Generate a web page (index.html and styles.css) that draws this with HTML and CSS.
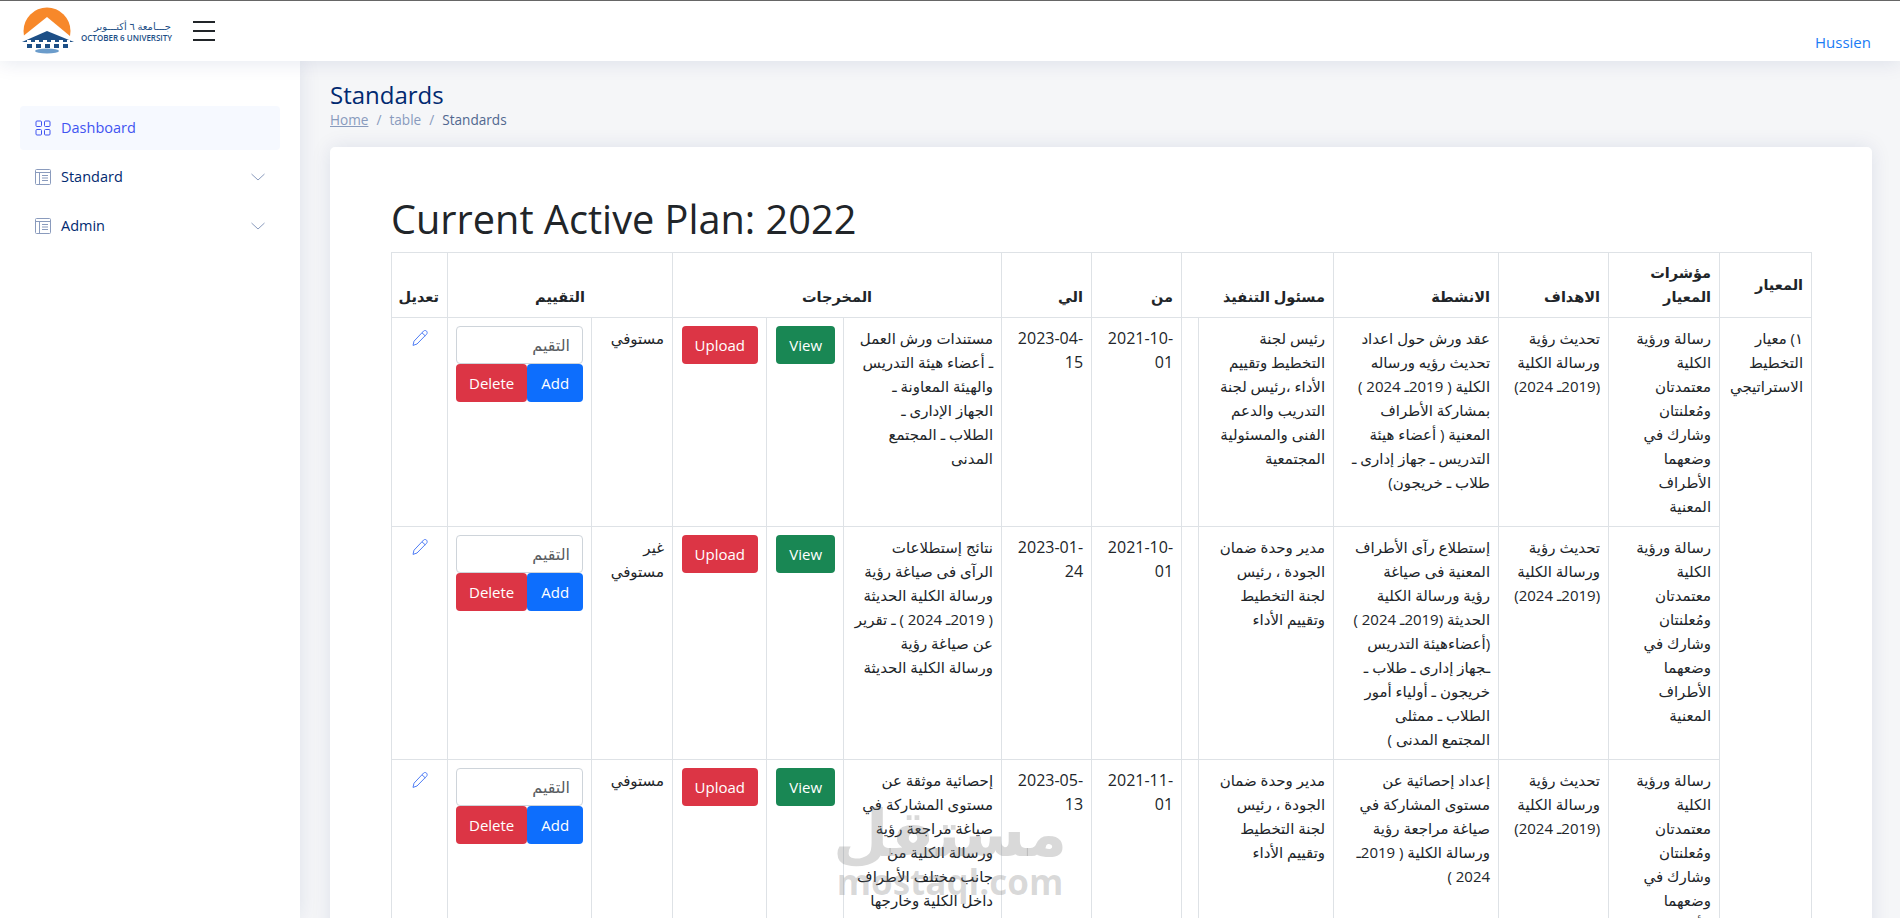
FILE: index.html
```html
<!DOCTYPE html>
<html lang="en">
<head>
  <meta charset="UTF-8">
  <title>Standards</title>
  <link rel="stylesheet" href="styles.css">
</head>
<body>

  <header class="topbar">
    <div class="logo">
      <svg class="logo-mark" width="54" height="48" viewBox="0 0 54 48">
        <circle cx="25" cy="24" r="23.5" fill="#f7882a"/>
        <path d="M25 10 L54 34 L54 48 L0 48 L0 30 Z" fill="#fff"/>
        <path d="M25 24 L52 35 L0 35 Z" fill="#1d4f86"/>
        <path d="M5 33h4v2H5zM13 33h4v2h-4zM21 33h4v2h-4zM29 33h4v2h-4zM37 33h4v2h-4zM45 33h3v2h-3z" fill="#fff"/>
        <path d="M5 37h5v4H5zM14 37h5v4h-5zM23 37h5v4h-5zM32 37h5v4h-5zM41 37h5v4h-5z" fill="#1d4f86"/>
        <ellipse cx="25" cy="44" rx="12" ry="2.5" fill="#6b9ccb"/>
      </svg>
      <div class="logo-text">
        <span class="logo-ar" dir="rtl">جـــامعة ٦ أكتـــوبر</span>
        <span class="logo-en">OCTOBER 6 UNIVERSITY</span>
      </div>
    </div>
    <div class="burger"><i></i><i></i><i></i></div>
    <a class="user" href="#">Hussien</a>
  </header>

  <div class="layout">
    <aside class="sidebar">
      <a class="nav-item active" href="#">
        <svg class="nav-icon" viewBox="0 0 16 16" fill="none" stroke="currentColor"><rect x="1" y="1" width="5.5" height="5.5" rx="1"/><rect x="9.5" y="1" width="5.5" height="5.5" rx="1"/><rect x="1" y="9.5" width="5.5" height="5.5" rx="1"/><rect x="9.5" y="9.5" width="5.5" height="5.5" rx="1"/></svg>
        Dashboard
      </a>
      <a class="nav-item" href="#">
        <svg class="nav-icon" viewBox="0 0 16 16" fill="none" stroke="#8a9bbd"><rect x=".5" y=".5" width="15" height="15" rx="1"/><path d="M.5 3.5h15M4.5 3.5v12M7 6.5h6M7 9h6M7 11.5h6"/></svg>
        Standard
        <svg class="chev" viewBox="0 0 14 8" fill="none" stroke="#8a9bbd"><path d="M.5 1l6.5 6 6.5-6"/></svg>
      </a>
      <a class="nav-item" href="#">
        <svg class="nav-icon" viewBox="0 0 16 16" fill="none" stroke="#8a9bbd"><rect x=".5" y=".5" width="15" height="15" rx="1"/><path d="M.5 3.5h15M4.5 3.5v12M7 6.5h6M7 9h6M7 11.5h6"/></svg>
        Admin
        <svg class="chev" viewBox="0 0 14 8" fill="none" stroke="#8a9bbd"><path d="M.5 1l6.5 6 6.5-6"/></svg>
      </a>
    </aside>

    <main class="main">
      <h1 class="page-title">Standards</h1>
      <nav class="crumbs"><a href="#">Home</a><span>/</span><em>table</em><span>/</span><b>Standards</b></nav>

      <section class="card">
        <h2 class="plan">Current Active Plan: 2022</h2>
        <table class="plan-table" dir="rtl">
          <colgroup>
            <col class="c-std"><col class="c-ind"><col class="c-goal"><col class="c-act"><col class="c-owner"><col class="c-blank">
            <col class="c-date"><col class="c-date"><col class="c-out"><col class="c-view"><col class="c-up">
            <col class="c-state"><col class="c-rate"><col class="c-edit">
          </colgroup>
          <thead>
            <tr>
              <th>المعيار</th>
              <th>مؤشرات<br>المعيار</th>
              <th>الاهداف</th>
              <th>الانشطة</th>
              <th colspan="2">مسئول التنفيذ</th>
              <th>من</th>
              <th>الي</th>
              <th class="mid" colspan="3">المخرجات</th>
              <th class="mid" colspan="2">التقييم</th>
              <th>تعديل</th>
            </tr>
          </thead>
          <tbody>
            <tr>
              <td rowspan="3">١) معيار<br>التخطيط<br>الاستراتيجي</td>
              <td>رسالة ورؤية<br>الكلية<br>معتمدتان<br>ومُعلنتان<br>وشارك في<br>وضعهما<br>الأطراف<br>المعنية</td>
              <td>تحديث رؤية<br>ورسالة الكلية<br>(2019ـ 2024)</td>
              <td>عقد ورش حول اعداد<br>تحديث رؤيه ورساله<br>الكلية ( 2019ـ 2024 )<br>بمشاركة الأطراف<br>المعنية ( أعضاء هيئة<br>التدريس ـ جهاز إدارى ـ<br>طلاب ـ خريجون)</td>
              <td>رئيس لجنة<br>التخطيط وتقييم<br>الأداء ،رئيس لجنة<br>التدريب والدعم<br>الفنى والمسئولية<br>المجتمعية</td>
              <td></td>
              <td class="date"><bdi>2021-10-</bdi><br>01</td>
              <td class="date"><bdi>2023-04-</bdi><br>15</td>
              <td>مستندات ورش العمل<br>ـ أعضاء هيئة التدريس<br>والهيئة المعاونة ـ<br>الجهاز الإدارى ـ<br>الطلاب ـ المجتمع<br>المدنى</td>
              <td><button class="btn green">View</button></td>
              <td><button class="btn red">Upload</button></td>
              <td>مستوفي</td>
              <td>
                <input class="rate" placeholder="التقيم" dir="rtl">
                <div class="rate-btns"><button class="btn blue">Add</button><button class="btn red">Delete</button></div>
              </td>
              <td class="edit"><svg class="pencil" viewBox="0 0 16 16" fill="none" stroke="#4f7df5"><path d="M11.6 1c1-.8 2.3-.6 3 .2s.8 2 0 3L5 14 1 15.4 2 11.2zM10 2.8l3.2 3"/></svg></td>
            </tr>
            <tr>
              <td>رسالة ورؤية<br>الكلية<br>معتمدتان<br>ومُعلنتان<br>وشارك في<br>وضعهما<br>الأطراف<br>المعنية</td>
              <td>تحديث رؤية<br>ورسالة الكلية<br>(2019ـ 2024)</td>
              <td>إستطلاع رآى الأطراف<br>المعنية فى صياغة<br>رؤية ورسالة الكلية<br>الحديثة (2019ـ 2024 )<br>(أعضاءهيئة التدريس<br>ـجهاز إدارى ـ طلاب ـ<br>خريجون ـ أولياء أمور<br>الطلاب ـ ممثلى<br>المجتمع المدنى )</td>
              <td>مدير وحدة ضمان<br>الجودة ، رئيس<br>لجنة التخطيط<br>وتقييم الأداء</td>
              <td></td>
              <td class="date"><bdi>2021-10-</bdi><br>01</td>
              <td class="date"><bdi>2023-01-</bdi><br>24</td>
              <td>نتائج إستطلاعات<br>الرآى فى صياغة رؤية<br>ورسالة الكلية الحديثة<br>( 2019ـ 2024 ) ـ تقرير<br>عن صياغة رؤية<br>ورسالة الكلية الحديثة</td>
              <td><button class="btn green">View</button></td>
              <td><button class="btn red">Upload</button></td>
              <td>غير<br>مستوفي</td>
              <td>
                <input class="rate" placeholder="التقيم" dir="rtl">
                <div class="rate-btns"><button class="btn blue">Add</button><button class="btn red">Delete</button></div>
              </td>
              <td class="edit"><svg class="pencil" viewBox="0 0 16 16" fill="none" stroke="#4f7df5"><path d="M11.6 1c1-.8 2.3-.6 3 .2s.8 2 0 3L5 14 1 15.4 2 11.2zM10 2.8l3.2 3"/></svg></td>
            </tr>
            <tr>
              <td>رسالة ورؤية<br>الكلية<br>معتمدتان<br>ومُعلنتان<br>وشارك في<br>وضعهما<br>الأطراف<br>المعنية</td>
              <td>تحديث رؤية<br>ورسالة الكلية<br>(2019ـ 2024)</td>
              <td>إعداد إحصائية عن<br>مستوى المشاركة في<br>صياغة مراجعة رؤية<br>ورسالة الكلية ( 2019ـ<br>2024 )</td>
              <td>مدير وحدة ضمان<br>الجودة ، رئيس<br>لجنة التخطيط<br>وتقييم الأداء</td>
              <td></td>
              <td class="date"><bdi>2021-11-</bdi><br>01</td>
              <td class="date"><bdi>2023-05-</bdi><br>13</td>
              <td>إحصائية موثقة عن<br>مستوى المشاركة في<br>صياغة مراجعة رؤية<br>ورسالة الكلية من<br>جانب مختلف الأطراف<br>داخل الكلية وخارجها</td>
              <td><button class="btn green">View</button></td>
              <td><button class="btn red">Upload</button></td>
              <td>مستوفي</td>
              <td>
                <input class="rate" placeholder="التقيم" dir="rtl">
                <div class="rate-btns"><button class="btn blue">Add</button><button class="btn red">Delete</button></div>
              </td>
              <td class="edit"><svg class="pencil" viewBox="0 0 16 16" fill="none" stroke="#4f7df5"><path d="M11.6 1c1-.8 2.3-.6 3 .2s.8 2 0 3L5 14 1 15.4 2 11.2zM10 2.8l3.2 3"/></svg></td>
            </tr>
          </tbody>
        </table>
      </section>
    </main>
  </div>

  <div class="watermark">
    <span class="wm-ar" dir="rtl">مستقل</span>
    <span class="wm-en">mostaql.com</span>
  </div>

</body>
</html>
```

FILE: styles.css
```css
* {
  box-sizing: border-box;
}

body {
  margin: 0;
  height: 918px;
  overflow: hidden;
  background: #f5f6f8;
  color: #212529;
  font-family: "Open Sans", "DejaVu Sans", sans-serif;
  font-size: 16px;
  line-height: 24px;
}

a {
  text-decoration: none;
}

/* top bar */
.topbar {
  height: 61px;
  display: flex;
  align-items: center;
  background: #fff;
  border-top: 1px solid #666;
  box-shadow: 0 2px 20px rgba(1, 41, 112, 0.1);
  padding-left: 22px;
  position: relative;
  z-index: 5;
}

.logo {
  display: flex;
  align-items: center;
  width: 171px;
}

.logo-mark {
  flex: none;
  margin-right: 5px;
}

.logo-text {
  display: flex;
  flex-direction: column;
  width: 90px;
  color: #1d4f86;
  white-space: nowrap;
}

.logo-ar {
  font-size: 10px;
  line-height: 13px;
}

.logo-en {
  font-size: 8px;
  line-height: 10px;
  font-weight: 600;
}

.burger {
  display: flex;
  flex-direction: column;
  gap: 7px;
}

.burger i {
  display: block;
  width: 22px;
  height: 2px;
  background: #212529;
}

.user {
  margin-left: auto;
  margin-right: 29px;
  margin-top: 22px;
  color: #1a7cf5;
  font-size: 15px;
}

/* sidebar + content */
.layout {
  display: flex;
  height: 857px;
  overflow: hidden;
}

.sidebar {
  width: 300px;
  flex: none;
  background: #fff;
  padding: 45px 20px 0;
  box-shadow: 0 0 20px rgba(1, 41, 112, 0.1);
}

.nav-item {
  display: flex;
  align-items: center;
  height: 44px;
  margin-bottom: 5px;
  padding: 0 15px;
  border-radius: 4px;
  color: #012970;
  font-size: 14.5px;
  font-weight: 500;
}

.nav-item.active {
  background: #f6f9ff;
  color: #4154f1;
}

.nav-icon {
  width: 16px;
  height: 16px;
  margin-right: 10px;
}

.chev {
  width: 14px;
  height: 8px;
  margin-left: auto;
}

.main {
  flex: 1;
  padding: 19px 28px 0 30px;
  min-width: 0;
}

.page-title {
  margin: 0;
  color: #012970;
  font-size: 24px;
  font-weight: 500;
  line-height: 29px;
}

.crumbs {
  display: flex;
  gap: 8px;
  margin-top: 2px;
  font-size: 13.6px;
  line-height: 17px;
  color: #899bbd;
}

.crumbs a {
  color: #899bbd;
  text-decoration: underline;
}

.crumbs em {
  font-style: normal;
}

.crumbs b {
  font-weight: 400;
  color: #51678f;
}

.card {
  margin-top: 19px;
  padding: 48px 61px 0 61px;
  background: #fff;
  border-radius: 5px;
  box-shadow: 0 0 20px rgba(1, 41, 112, 0.1);
  height: 900px;
}

.plan {
  margin: 0 0 9px;
  font-size: 39.7px;
  font-weight: 400;
  line-height: 48px;
}

/* the plan table */
.plan-table {
  width: 1420px;
  table-layout: fixed;
  border-collapse: collapse;
  font-size: 15px;
}

.plan-table th,
.plan-table td {
  border: 1px solid #dee2e6;
  padding: 8px;
  vertical-align: top;
  text-align: right;
  white-space: nowrap;
}

.plan-table th {
  vertical-align: bottom;
  font-size: 14.5px;
  font-weight: 700;
}

.plan-table th:first-child {
  vertical-align: middle;
}

.plan-table th.mid {
  text-align: center;
}

.plan-table .date {
  font-size: 16px;
}

.plan-table .edit {
  text-align: center;
}

.c-std { width: 92px; }
.c-ind { width: 111px; }
.c-goal { width: 110px; }
.c-act { width: 165px; }
.c-owner { width: 135px; }
.c-blank { width: 17px; }
.c-date { width: 90px; }
.c-out { width: 158px; }
.c-view { width: 77px; }
.c-up { width: 94px; }
.c-state { width: 81px; }
.c-rate { width: 144px; }
.c-edit { width: 56px; }

.btn {
  display: inline-block;
  height: 38px;
  padding: 0 12px;
  border: 1px solid transparent;
  border-radius: 4px;
  color: #fff;
  font-family: inherit;
  font-size: 15px;
}

.green { background: #198754; }
.red { background: #dc3545; }
.blue { background: #0d6efd; }

.rate {
  display: block;
  width: 100%;
  height: 38px;
  padding: 6px 12px;
  border: 1px solid #ced4da;
  border-radius: 4px;
  font-family: inherit;
  font-size: 16px;
}

.rate::placeholder {
  color: #595c5f;
}

.rate-btns {
  display: flex;
  flex-direction: row-reverse;
  justify-content: flex-end;
  direction: ltr;
}

.rate-btns .red {
  flex: 1;
}

.rate-btns .blue {
  width: 56px;
}

.pencil {
  width: 16px;
  height: 16px;
  vertical-align: -2px;
}

/* site watermark over the screenshot */
.watermark {
  position: absolute;
  left: 830px;
  top: 800px;
  width: 240px;
  display: flex;
  flex-direction: column;
  align-items: center;
  color: rgba(120, 120, 120, 0.28);
  pointer-events: none;
}

.wm-ar {
  font-size: 64px;
  line-height: 64px;
  font-weight: 700;
}

.wm-en {
  font-size: 35px;
  line-height: 36px;
  font-weight: 700;
}
```
